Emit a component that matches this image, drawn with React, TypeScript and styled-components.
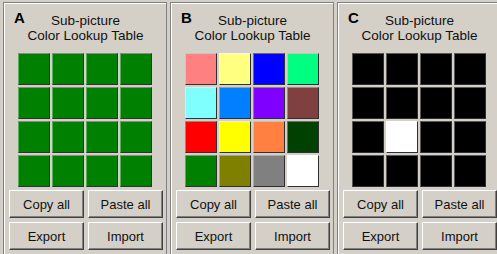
import React from "react";
import styled, { createGlobalStyle } from "styled-components";

const Global = createGlobalStyle`
  html, body { margin: 0; padding: 0; background: #d4d0c8; overflow: hidden; }
  body { font-family: "Liberation Sans", Arial, sans-serif; }
`;

const Page = styled.div`
  display: flex;
  gap: 3px;
  padding: 2px 0 0 3px;
  width: 497px;
  height: 254px;
  box-sizing: border-box;
  overflow: hidden;
`;

const Panel = styled.section`
  flex: 0 0 164px;
  width: 164px;
  height: 260px;
  box-sizing: border-box;
  border: 1px solid #808080;
  box-shadow: inset 1px 1px 0 #ffffff;
  padding: 10px 4px 0 5px;
  display: flex;
  flex-direction: column;
`;

const Header = styled.div`
  display: grid;
  grid-template-columns: 1fr auto 1fr;
  align-items: start;
`;

const Label = styled.div`
  font-size: 15px;
  font-weight: bold;
  line-height: 15px;
  margin-top: -3px;
  padding-left: 5px;
  color: #000;
`;

const Title = styled.div`
  font-size: 13.5px;
  line-height: 15px;
  text-align: center;
  color: #111;
  white-space: nowrap;
`;

const Grid = styled.div`
  display: grid;
  grid-template-columns: repeat(4, 32px);
  grid-auto-rows: 32px;
  gap: 2px;
  margin: 10px auto 0 auto;
  padding-right: 1px;
`;

const Swatch = styled.div<{ $c: string }>`
  box-sizing: border-box;
  background: ${(p) => p.$c};
  border-style: solid;
  border-width: 1px;
  border-color: rgba(255, 255, 255, 0.35) #303030 #303030 rgba(255, 255, 255, 0.35);
`;

const Buttons = styled.div`
  display: grid;
  grid-template-columns: 75px 75px;
  grid-auto-rows: 28px;
  column-gap: 4px;
  row-gap: 4px;
  margin-top: 3px;
`;

const Button = styled.button`
  box-sizing: border-box;
  margin: 0;
  padding: 0;
  background: #d4d0c8;
  font-family: "Liberation Sans", Arial, sans-serif;
  font-size: 13px;
  color: #111;
  border-style: solid;
  border-width: 1px;
  border-color: #ffffff #404040 #404040 #ffffff;
  box-shadow: inset -1px -1px 0 #808080;
  cursor: default;
`;

const G = "#008000";
const K = "#000000";

const tables: { label: string; colors: string[] }[] = [
  { label: "A", colors: Array(16).fill(G) },
  {
    label: "B",
    colors: [
      "#ff8080", "#ffff80", "#0000ff", "#00ff80",
      "#80ffff", "#0080ff", "#8000ff", "#804040",
      "#ff0000", "#ffff00", "#ff8040", "#004000",
      "#008000", "#808000", "#808080", "#ffffff",
    ],
  },
  {
    label: "C",
    colors: [K, K, K, K, K, K, K, K, K, "#ffffff", K, K, K, K, K, K],
  },
];

export default function App() {
  return (
    <>
      <Global />
      <Page>
        {tables.map((t) => (
          <Panel key={t.label}>
            <Header>
              <Label>{t.label}</Label>
              <Title>
                Sub-picture
                <br />
                Color Lookup Table
              </Title>
              <span />
            </Header>
            <Grid>
              {t.colors.map((c, i) => (
                <Swatch key={i} $c={c} />
              ))}
            </Grid>
            <Buttons>
              <Button>Copy all</Button>
              <Button>Paste all</Button>
              <Button>Export</Button>
              <Button>Import</Button>
            </Buttons>
          </Panel>
        ))}
      </Page>
    </>
  );
}
